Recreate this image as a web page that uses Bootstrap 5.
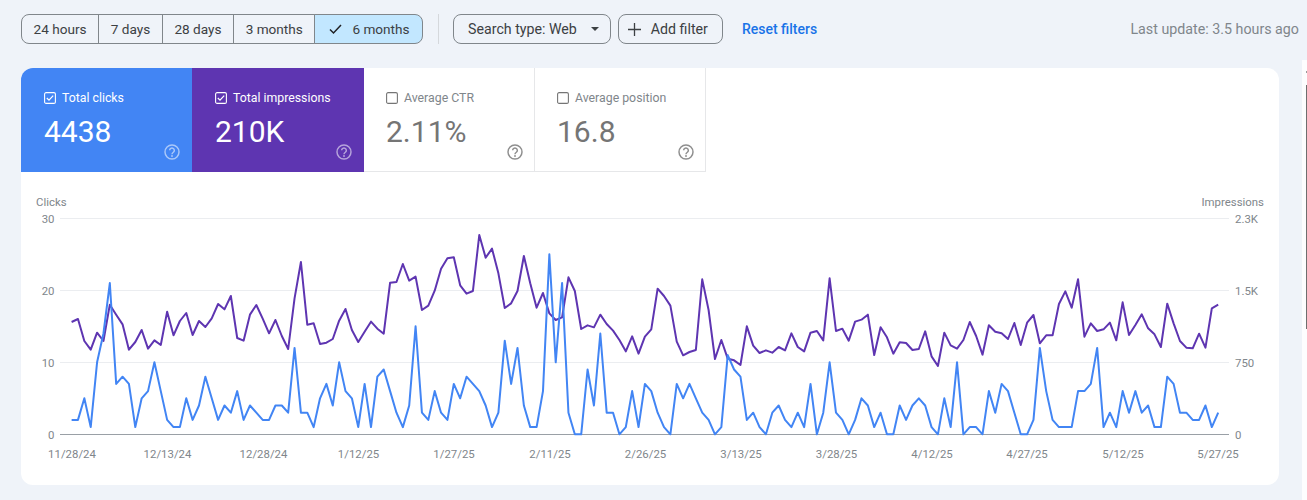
<!DOCTYPE html>
<html lang="en">
<head>
<meta charset="utf-8">
<title>Search results performance</title>
<link href="https://cdn.jsdelivr.net/npm/bootstrap@5.3.0/dist/css/bootstrap.min.css" rel="stylesheet">
<style>
html,body{height:500px;overflow:hidden}
body{background:#eff3f9;font-family:Roboto,"Liberation Sans",sans-serif;color:#3c4043;position:relative}
.gsc-page{padding:14px 0 0 21px}
.gsc-bar{height:30px;width:1278px}
.gsc-seg .btn,.gsc-chip{line-height:28px;height:30px;color:#3c4043;background:transparent;border:1px solid #80868b;white-space:nowrap;font-family:inherit}
.gsc-seg .btn{font-size:13.6px;padding:0 11.6px}
.gsc-seg .btn:first-child{border-radius:8px 0 0 8px}
.gsc-seg .btn:last-child{border-radius:0 8px 8px 0}
.gsc-seg .btn.gsc-on{background:#c2e7ff;padding:0 12.5px 0 14px}
.gsc-tick{margin-right:10px;vertical-align:-1px}
.gsc-chip{border-radius:8px;font-size:14.2px}
.gsc-chip-type{padding:0 11px 0 14px;margin-right:7px}
.gsc-chip-add{padding:0 14px 0 9px}
.gsc-caret{margin-left:14px}
.gsc-plus{margin-right:10px}
.gsc-sep{width:1px;height:30px;background:#d5d8dc;margin:0 14px 0 15px}
.gsc-reset{font-size:14px;font-weight:500;color:#1a73e8;text-decoration:none;margin-left:19px}
.gsc-upd{font-size:14.25px;color:#80868b;margin-top:2px}
.gsc-panel{width:1258px;height:417px;margin-top:24px;border:0;border-radius:12px;overflow:hidden;background:#fff}
.gsc-tab{width:171px;height:104px;padding:21px 0 0 23px;position:relative;color:#80868b}
.gsc-tab.gsc-b{background:#4285f4;color:#fff}
.gsc-tab.gsc-p{background:#5e35b1;color:#fff;width:172px}
.gsc-tab.gsc-w{border-right:1px solid #e6e7e9;border-bottom:1px solid #e6e7e9;padding-left:22px}
.gsc-lab{font-size:12.3px;line-height:18px;height:18px;gap:6px}
.gsc-val{font-size:30px;line-height:36px;margin-top:7px}
.gsc-tab.gsc-w .gsc-val{color:#757575}
.gsc-help{position:absolute;right:12px;bottom:12px;opacity:.55}
.gsc-tab.gsc-w .gsc-help{right:11px;bottom:11px}
.gsc-chart{display:block}
.gsc-t{font-family:Roboto,"Liberation Sans",sans-serif;font-size:11.4px;fill:#80868b}
.gsc-rail{position:absolute;top:60px;right:0;bottom:0;width:5px;background:#fdfdfe}
.gsc-thumb{position:absolute;top:25px;right:0;width:1.5px;height:244px;background:#6f6f6f}
.gsc-dot{position:absolute;top:11px;right:0;width:1.5px;height:2px;background:#9a9a9a}
</style>
</head>
<body>
<div class="gsc-page">
  <div class="d-flex align-items-center gsc-bar">
    <div class="btn-group gsc-seg" role="group">
      <button type="button" class="btn">24 hours</button>
      <button type="button" class="btn">7 days</button>
      <button type="button" class="btn">28 days</button>
      <button type="button" class="btn">3 months</button>
      <button type="button" class="btn gsc-on"><svg class="gsc-tick" width="13" height="12" viewBox="0 0 13 12"><path d="M1 6.500 4.500 10 12 2" fill="none" stroke="#202124" stroke-width="1.500"/></svg>6 months</button>
    </div>
    <div class="gsc-sep"></div>
    <button type="button" class="gsc-chip gsc-chip-type d-flex align-items-center">Search type: Web<svg class="gsc-caret" width="8" height="4" viewBox="0 0 8 4"><path d="M0 0h8L4 4z" fill="#3c4043"/></svg></button>
    <button type="button" class="gsc-chip gsc-chip-add d-flex align-items-center"><svg class="gsc-plus" width="13" height="13" viewBox="0 0 13 13"><path d="M6.500 0v13M0 6.500h13" stroke="#3c4043" stroke-width="1.300"/></svg>Add filter</button>
    <a href="#" class="gsc-reset">Reset filters</a>
    <span class="gsc-upd ms-auto">Last update: 3.5 hours ago</span>
  </div>

  <div class="card gsc-panel">
    <div class="d-flex">
      <div class="gsc-tab gsc-b">
        <div class="d-flex align-items-center gsc-lab"><svg width="12" height="12" viewBox="0 0 12 12"><rect x=".6" y=".6" width="10.8" height="10.8" rx="1.5" fill="none" stroke="#fff" stroke-width="1.1"/><path d="M2.800 6 5 8.200 9.200 3.600" fill="none" stroke="#fff" stroke-width="1.200"/></svg>Total clicks</div>
        <div class="gsc-val">4438</div>
        <svg class="gsc-help" width="16" height="16" viewBox="0 0 24 24"><circle cx="12" cy="12" r="10.500" fill="none" stroke="#fff" stroke-width="2.200"/><path d="M8.500 9.500a3.500 3.500 0 1 1 5.500 2.900c-1.200.8-2 1.400-2 3" fill="none" stroke="#fff" stroke-width="2.200"/><circle cx="12" cy="18" r="1.400" fill="#fff"/></svg>
      </div>
      <div class="gsc-tab gsc-p">
        <div class="d-flex align-items-center gsc-lab"><svg width="12" height="12" viewBox="0 0 12 12"><rect x=".6" y=".6" width="10.8" height="10.8" rx="1.5" fill="none" stroke="#fff" stroke-width="1.1"/><path d="M2.800 6 5 8.200 9.200 3.600" fill="none" stroke="#fff" stroke-width="1.200"/></svg>Total impressions</div>
        <div class="gsc-val">210K</div>
        <svg class="gsc-help" width="16" height="16" viewBox="0 0 24 24"><circle cx="12" cy="12" r="10.500" fill="none" stroke="#fff" stroke-width="2.200"/><path d="M8.500 9.500a3.500 3.500 0 1 1 5.500 2.900c-1.200.8-2 1.400-2 3" fill="none" stroke="#fff" stroke-width="2.200"/><circle cx="12" cy="18" r="1.400" fill="#fff"/></svg>
      </div>
      <div class="gsc-tab gsc-w">
        <div class="d-flex align-items-center gsc-lab"><svg width="12" height="12" viewBox="0 0 12 12"><rect x=".6" y=".6" width="10.8" height="10.8" rx="1.5" fill="none" stroke="#757575" stroke-width="1.1"/></svg>Average CTR</div>
        <div class="gsc-val">2.11%</div>
        <svg class="gsc-help" width="16" height="16" viewBox="0 0 24 24"><circle cx="12" cy="12" r="10.500" fill="none" stroke="#333" stroke-width="2.200"/><path d="M8.500 9.500a3.500 3.500 0 1 1 5.500 2.900c-1.200.8-2 1.400-2 3" fill="none" stroke="#333" stroke-width="2.200"/><circle cx="12" cy="18" r="1.400" fill="#333"/></svg>
      </div>
      <div class="gsc-tab gsc-w">
        <div class="d-flex align-items-center gsc-lab"><svg width="12" height="12" viewBox="0 0 12 12"><rect x=".6" y=".6" width="10.8" height="10.8" rx="1.5" fill="none" stroke="#757575" stroke-width="1.1"/></svg>Average position</div>
        <div class="gsc-val">16.8</div>
        <svg class="gsc-help" width="16" height="16" viewBox="0 0 24 24"><circle cx="12" cy="12" r="10.500" fill="none" stroke="#333" stroke-width="2.200"/><path d="M8.500 9.500a3.500 3.500 0 1 1 5.500 2.900c-1.200.8-2 1.400-2 3" fill="none" stroke="#333" stroke-width="2.200"/><circle cx="12" cy="18" r="1.400" fill="#333"/></svg>
      </div>
    </div>
    <svg class="gsc-chart" width="1258" height="313" viewBox="21 172 1258 313">
      <path d="M60 218.500H1229M60 290.500H1229M60 362.500H1229" stroke="#ebedf0" stroke-width="1"/>
      <path d="M60 434.500H1229" stroke="#9aa0a6" stroke-width="1"/>
      <text class="gsc-t" x="36" y="206">Clicks</text>
      <text class="gsc-t" x="1264" y="206" text-anchor="end">Impressions</text>
      <g text-anchor="end">
        <text class="gsc-t" x="54.500" y="223">30</text>
        <text class="gsc-t" x="54.500" y="295">20</text>
        <text class="gsc-t" x="54.500" y="367">10</text>
        <text class="gsc-t" x="54.500" y="439">0</text>
      </g>
      <text class="gsc-t" x="1235" y="223">2.3K</text>
      <text class="gsc-t" x="1235" y="295">1.5K</text>
      <text class="gsc-t" x="1235" y="367">750</text>
      <text class="gsc-t" x="1235" y="439">0</text>
      <g text-anchor="middle">
        <text class="gsc-t" x="72" y="458">11/28/24</text>
        <text class="gsc-t" x="167.500" y="458">12/13/24</text>
        <text class="gsc-t" x="263.500" y="458">12/28/24</text>
        <text class="gsc-t" x="358.500" y="458">1/12/25</text>
        <text class="gsc-t" x="454" y="458">1/27/25</text>
        <text class="gsc-t" x="550" y="458">2/11/25</text>
        <text class="gsc-t" x="645.500" y="458">2/26/25</text>
        <text class="gsc-t" x="741" y="458">3/13/25</text>
        <text class="gsc-t" x="836.500" y="458">3/28/25</text>
        <text class="gsc-t" x="932" y="458">4/12/25</text>
        <text class="gsc-t" x="1027" y="458">4/27/25</text>
        <text class="gsc-t" x="1123" y="458">5/12/25</text>
        <text class="gsc-t" x="1218" y="458">5/27/25</text>
      </g>
      <polyline id="gsc-imp" fill="none" stroke="#5e35b1" stroke-width="2" stroke-linejoin="round"/>
      <polyline id="gsc-clk" fill="none" stroke="#4285f4" stroke-width="2" stroke-linejoin="round"/>
    </svg>
  </div>
</div>
<div class="gsc-rail"><div class="gsc-dot"></div><div class="gsc-thumb"></div></div>
<script src="https://cdn.jsdelivr.net/npm/bootstrap@5.3.0/dist/js/bootstrap.bundle.min.js"></script>
<script>
var clicks=[2,2,5,1,10,14,21,7,8,7,1,5,6,10,6,2,1,1,5,2,4,8,5,2,4,3,6,2,4,3,2,2,4,4,3,12,3,3,1,5,7,4,10,6,5,1,7,1,8,9,6,3,1,4,15,3,2,6,3,2,7,5,8,7,6,4,1,3,13,7,12,4,1,1,6,25,10,21,3,0,0,9,4,14,3,3,0,1,6,1,7,6,3,1,0,7,5,7,5,3,2,0,1,11,9,8,2,3,1,0,3,4,2,1,3,1,7,0,3,10,3,2,0,2,5,4,1,3,0,0,4,2,4,5,4,1,0,5,1,10,0,1,1,0,6,3,7,6,3,0,0,2,12,6,2,1,1,1,6,6,7,12,1,3,1,6,3,6,3,4,1,1,8,7,3,3,2,2,4,1,3];
var imp=[396,387,453,479,428,453,344,374,403,479,456,420,476,451,465,365,436,393,369,435,393,411,385,342,358,318,444,452,374,345,386,430,390,438,477,325,216,404,400,462,458,447,392,357,420,456,425,395,416,431,278,276,222,272,260,360,347,302,236,205,202,286,311,303,135,203,176,250,354,340,303,198,280,353,309,370,390,382,262,303,417,406,412,374,402,422,450,484,439,491,440,418,296,318,347,455,496,486,480,268,360,507,450,506,511,525,409,467,489,481,488,471,481,430,471,484,428,423,451,265,423,416,452,395,389,374,495,412,442,491,457,459,480,477,424,499,528,428,466,476,450,396,438,494,406,425,430,447,399,465,398,375,460,436,436,342,304,353,268,440,400,423,418,398,451,337,435,405,373,415,433,471,341,400,453,473,475,431,473,355,344];
var X=function(i){return (71.6+i*6.37).toFixed(2)};
document.getElementById('gsc-clk').setAttribute('points',clicks.map(function(v,i){return X(i)+','+(434.3-v*7.2).toFixed(2)}).join(' '));
document.getElementById('gsc-imp').setAttribute('points',imp.map(function(v,i){return X(i)+','+(190+v/3).toFixed(2)}).join(' '));
</script>
</body>
</html>
